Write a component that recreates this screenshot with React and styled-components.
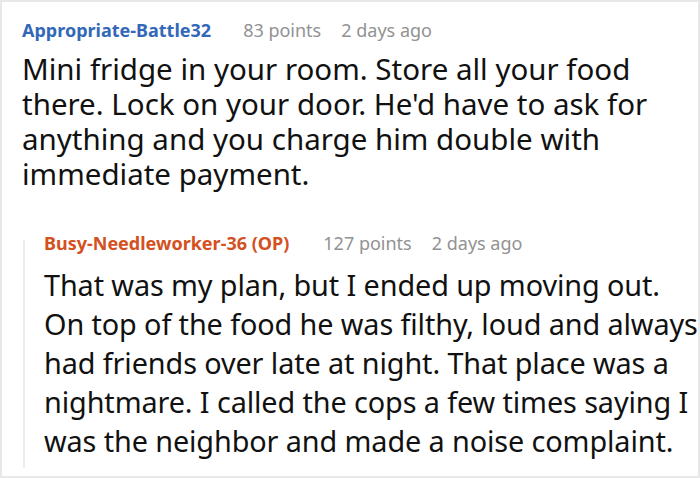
import styled, { createGlobalStyle } from 'styled-components';

const GlobalStyle = createGlobalStyle`
  body {
    margin: 0;
    font-family: 'Noto Sans', 'Open Sans', sans-serif;
    background: #fff;
  }
`;

const Frame = styled.div`
  box-sizing: border-box;
  width: 700px;
  height: 478px;
  border: 2px solid #e8e8e8;
  padding: 16px 0 0 20px;
  overflow: hidden;
`;

const Comment = styled.div`
  display: flex;
  flex-direction: column;
`;

const Meta = styled.div`
  display: flex;
  align-items: baseline;
  gap: 20px;
  font-size: 18px;
  line-height: 24px;
`;

const Author = styled.span`
  font-weight: 700;
  color: ${(p) => (p.$op ? '#d4501e' : '#3368b8')};
  margin-right: ${(p) => (p.$op ? '14px' : '12px')};
`;

const Info = styled.span`
  color: #929292;
`;

const Body = styled.p`
  margin: ${(p) => (p.$reply ? '10px 0 0' : '9px 0 0')};
  font-size: ${(p) => (p.$reply ? '28.8px' : '29.5px')};
  line-height: ${(p) => (p.$reply ? '39px' : '35px')};
  letter-spacing: ${(p) => (p.$reply ? '-0.1px' : '0')};
  color: #111;
`;

const Reply = styled.div`
  position: relative;
  margin: 40px 0 0 1px;
  padding-left: 21px;
  display: flex;
  flex-direction: column;

  &::before {
    content: '';
    position: absolute;
    left: 0;
    top: 9px;
    bottom: -8px;
    width: 2px;
    background: #ececec;
  }
`;

export default function App() {
  return (
    <>
      <GlobalStyle />
      <Frame>
        <Comment>
          <Meta>
            <Author>Appropriate-Battle32</Author>
            <Info>83 points</Info>
            <Info>2 days ago</Info>
          </Meta>
          <Body>
            Mini fridge in your room. Store all your food there. Lock on your door. He'd have to ask for
            anything and you charge him double with immediate payment.
          </Body>
          <Reply>
            <Meta>
              <Author $op>Busy-Needleworker-36 (OP)</Author>
              <Info>127 points</Info>
              <Info>2 days ago</Info>
            </Meta>
            <Body $reply>
              That was my plan, but I ended up moving out. On top of the food he was filthy, loud and
              always had friends over late at night. That place was a nightmare. I called the cops a few
              times saying I was the neighbor and made a noise complaint.
            </Body>
          </Reply>
        </Comment>
      </Frame>
    </>
  );
}
